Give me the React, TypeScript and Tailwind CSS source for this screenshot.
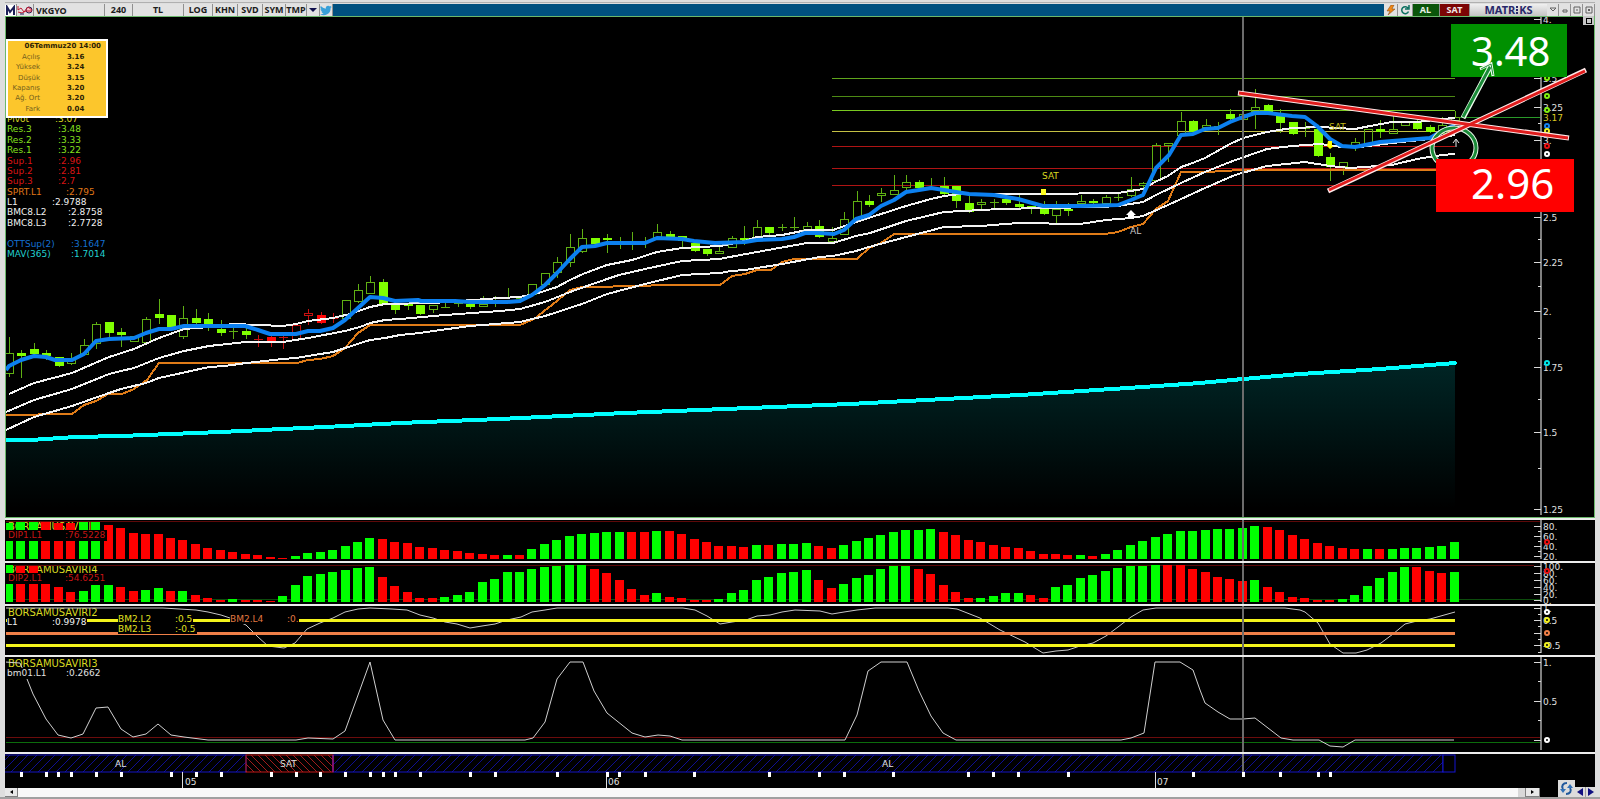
import type { ReactNode } from "react";

type Point = [number, number];
type Candle = [string, number, number, number, number];

const STEP = 12.464;
const barX = (i: number) => Math.round(9 + i * STEP);
const toPoints = (pts: Point[]) => pts.map((p) => p.join(",")).join(" ");

// kind (h hollow, f filled, c cross, v wick only, upper case = red), body top, body bottom, high, low
const candles: Candle[] = [
  ["h", 353, 373, 337, 377], ["f", 353, 356, 350, 378], ["f", 349, 354, 343, 354], ["f", 353, 356, 350, 360],
  ["f", 357, 366, 357, 366], ["h", 359, 363, 353, 365], ["h", 345, 354, 339, 355], ["h", 324, 343, 322, 349],
  ["f", 322, 333, 322, 337], ["f", 332, 335, 328, 347], ["h", 336, 341, 336, 341], ["h", 319, 342, 317, 342],
  ["f", 314, 318, 299, 324], ["f", 315, 327, 315, 330], ["h", 318, 336, 306, 339], ["f", 318, 323, 309, 323],
  ["f", 319, 324, 313, 331], ["f", 329, 333, 320, 336], ["c", 331, 331, 328, 339], ["f", 331, 335, 328, 339],
  ["C", 339, 339, 335, 347], ["F", 337, 342, 335, 347], ["C", 337, 337, 335, 349], ["H", 325, 339, 325, 339],
  ["H", 313, 315, 309, 325], ["F", 315, 323, 312, 323], ["C", 318, 318, 313, 323], ["h", 300, 318, 300, 318],
  ["h", 290, 301, 284, 303], ["h", 282, 293, 276, 293], ["f", 282, 304, 279, 304], ["f", 305, 310, 305, 314],
  ["f", 304, 306, 304, 310], ["f", 305, 314, 305, 314], ["h", 305, 309, 305, 313], ["c", 307, 307, 303, 307],
  ["c", 303, 303, 302, 307], ["f", 304, 307, 302, 309], ["h", 304, 306, 296, 306], ["v", 300, 300, 296, 307],
  ["c", 297, 297, 288, 298], ["c", 298, 298, 296, 303], ["h", 284, 294, 284, 294], ["h", 273, 284, 273, 284],
  ["h", 262, 272, 257, 278], ["h", 247, 262, 234, 267], ["h", 238, 251, 229, 253], ["f", 238, 244, 238, 244],
  ["f", 238, 240, 234, 253], ["v", 240, 240, 237, 249], ["v", 240, 240, 232, 250], ["v", 240, 240, 237, 248],
  ["h", 232, 238, 224, 238], ["f", 234, 237, 231, 237], ["f", 236, 241, 236, 248], ["f", 243, 251, 243, 251],
  ["f", 249, 254, 249, 256], ["h", 251, 253, 246, 253], ["h", 238, 247, 236, 247], ["f", 238, 240, 226, 245],
  ["h", 227, 237, 220, 237], ["f", 227, 233, 227, 235], ["c", 227, 227, 224, 231], ["c", 227, 227, 217, 230],
  ["h", 226, 231, 222, 231], ["f", 226, 237, 220, 237], ["h", 238, 241, 227, 243], ["h", 219, 234, 212, 234],
  ["h", 201, 218, 191, 218], ["f", 201, 205, 195, 207], ["h", 193, 195, 188, 202], ["h", 190, 194, 175, 194],
  ["h", 182, 187, 175, 191], ["f", 182, 188, 180, 188], ["v", 185, 185, 178, 188], ["f", 186, 194, 177, 194],
  ["f", 186, 201, 186, 208], ["f", 203, 212, 195, 212], ["h", 202, 204, 199, 209], ["c", 202, 202, 199, 208],
  ["f", 199, 203, 199, 205], ["f", 204, 207, 195, 207], ["f", 206, 209, 206, 214], ["f", 208, 214, 201, 214],
  ["h", 209, 215, 201, 224], ["f", 209, 211, 203, 216], ["h", 201, 203, 195, 203], ["f", 201, 203, 199, 203],
  ["h", 197, 203, 195, 203], ["c", 197, 197, 194, 201], ["h", 189, 195, 177, 197], ["h", 183, 185, 182, 197],
  ["h", 145, 180, 143, 180], ["h", 143, 145, 143, 162], ["h", 121, 135, 112, 135], ["f", 121, 132, 120, 132],
  ["h", 125, 127, 119, 128], ["c", 126, 126, 122, 135], ["f", 114, 119, 109, 122], ["h", 114, 119, 108, 122],
  ["h", 107, 111, 89, 129], ["f", 105, 112, 104, 112], ["f", 116, 123, 109, 133], ["f", 122, 134, 122, 134],
  ["c", 128, 128, 122, 137], ["f", 129, 156, 129, 156], ["f", 157, 167, 153, 181], ["h", 162, 166, 162, 175],
  ["h", 142, 147, 138, 151], ["h", 129, 143, 129, 143], ["f", 129, 132, 120, 138], ["h", 129, 133, 116, 133],
  ["h", 122, 125, 122, 125], ["f", 122, 129, 120, 129], ["f", 127, 132, 125, 133], ["h", 125, 133, 117, 133],
  ["h", 117, 120, 111, 120],
];

const cyanLine: Point[] = [
  [6, 440], [30, 440], [76, 437], [121, 436], [221, 432], [345, 426], [400, 423], [500, 419], [625, 413], [700, 410],
  [850, 404], [1020, 395], [1143, 387], [1200, 383], [1243, 379], [1300, 374], [1380, 369], [1455, 363],
];

const blueLine: Point[] = [
  [6, 370], [9, 366], [21, 360], [34, 356], [46, 357], [55, 360], [72, 360], [84, 354], [96, 341], [109, 339],
  [134, 338], [146, 333], [159, 329], [171, 329], [184, 326], [245, 326], [258, 330], [270, 334], [296, 334],
  [308, 331], [320, 331], [333, 328], [345, 320], [358, 308], [370, 297], [383, 298], [395, 301], [418, 300],
  [421, 301], [455, 301], [470, 302], [507, 302], [520, 301], [532, 295], [545, 285], [557, 273], [570, 259],
  [582, 247], [595, 246], [607, 243], [645, 243], [657, 238], [682, 239], [694, 241], [715, 243], [745, 242],
  [757, 240], [782, 239], [794, 237], [805, 233], [819, 233], [834, 234], [844, 230], [856, 219], [869, 215],
  [881, 206], [894, 200], [906, 192], [919, 190], [931, 188], [944, 190], [956, 192], [969, 194], [994, 195],
  [1006, 197], [1018, 199], [1043, 206], [1080, 206], [1118, 205], [1131, 200], [1143, 195], [1156, 168],
  [1169, 155], [1181, 135], [1193, 134], [1205, 129], [1218, 128], [1230, 122], [1243, 117], [1255, 113],
  [1268, 113], [1292, 116], [1305, 117], [1317, 126], [1330, 139], [1342, 146], [1355, 147], [1380, 142],
  [1430, 138], [1442, 131], [1455, 125],
];

const bandLines: Point[][] = [
  [
    [9, 394], [34, 383], [72, 373], [109, 357], [134, 349], [159, 338], [184, 329], [209, 327], [233, 324],
    [283, 326], [296, 324], [308, 321], [333, 318], [350, 314], [370, 307], [385, 304], [433, 303], [500, 298],
    [520, 297], [538, 293], [557, 287], [570, 280], [583, 274], [607, 265], [632, 260], [657, 252], [682, 248],
    [720, 246], [745, 241], [757, 237], [782, 235], [807, 230], [833, 230], [856, 222], [881, 214], [906, 206],
    [931, 199], [944, 196], [960, 194], [1040, 194], [1118, 193], [1143, 189], [1155, 182], [1168, 176],
    [1181, 167], [1190, 164], [1205, 158], [1230, 144], [1243, 138], [1267, 132], [1292, 128], [1320, 127],
    [1355, 129], [1370, 126], [1392, 122], [1417, 122], [1442, 119], [1455, 118],
  ],
  [
    [6, 412], [34, 400], [72, 389], [109, 374], [121, 371], [134, 368], [159, 358], [184, 351], [209, 346],
    [246, 342], [283, 342], [308, 338], [345, 331], [360, 327], [370, 323], [385, 320], [400, 319], [445, 315],
    [500, 311], [520, 309], [545, 302], [570, 292], [607, 279], [619, 275], [645, 269], [682, 261], [719, 259],
    [757, 252], [807, 243], [833, 243], [856, 236], [870, 233], [906, 221], [944, 212], [1000, 209], [1043, 208],
    [1100, 207], [1118, 206], [1143, 202], [1156, 195], [1181, 183], [1205, 172], [1230, 162], [1267, 149],
    [1292, 146], [1320, 144], [1342, 147], [1360, 147], [1392, 143], [1430, 139], [1455, 135],
  ],
  [
    [6, 430], [34, 417], [72, 406], [109, 393], [121, 389], [146, 383], [159, 378], [209, 367], [225, 366],
    [246, 363], [283, 359], [296, 358], [308, 356], [333, 352], [345, 348], [370, 340], [385, 338], [400, 335],
    [420, 333], [433, 331], [470, 326], [520, 322], [532, 319], [545, 316], [582, 304], [607, 294], [645, 284],
    [682, 275], [720, 273], [731, 271], [745, 270], [782, 264], [820, 257], [833, 256], [856, 251], [869, 247],
    [906, 237], [944, 227], [981, 226], [1018, 223], [1080, 224], [1106, 220], [1131, 218], [1143, 216],
    [1168, 205], [1205, 188], [1235, 175], [1267, 166], [1305, 162], [1330, 166], [1350, 168], [1392, 165],
    [1417, 159], [1442, 155], [1455, 154],
  ],
];

const orangeLine: Point[] = [
  [6, 415], [72, 414], [84, 405], [96, 401], [108, 394], [122, 394], [134, 389], [147, 380], [159, 363], [297, 363],
  [308, 360], [320, 359], [333, 356], [345, 348], [358, 333], [370, 325], [520, 325], [534, 319], [557, 301],
  [570, 290], [582, 287], [645, 286], [657, 285], [720, 285], [732, 276], [745, 274], [757, 270], [771, 270],
  [782, 262], [794, 259], [857, 259], [869, 248], [881, 243], [894, 234], [1105, 234], [1118, 232], [1131, 227],
  [1143, 224], [1156, 209], [1168, 201], [1181, 172], [1205, 172], [1225, 171], [1240, 170], [1455, 170],
];

const levels = [
  { y: 78, color: "#5fa51c" },
  { y: 96, color: "#4d8a14" },
  { y: 110, color: "#79c820" },
  { y: 131, color: "#c4c044" },
  { y: 146, color: "#b01414" },
  { y: 168, color: "#b01414" },
  { y: 185, color: "#b01414" },
];

const dip1Colors =
  "GGGRRRGGRRRRRRRRRRRRRRRGGGGGGGRRRRRRRRRRGRGGGGGGGGRRGRRRRRRRGRGGGRRGGGGGGGGRRRRRRRRRRRGRGGGGGGGGGGGGGRRRRRRRRGRGGGGGG";
const dip1Tops = [
  523, 522, 522, 522, 523, 523, 522, 522, 525, 528, 533, 534, 534, 538, 540, 544, 548, 550, 552, 554, 555, 557, 558,
  556, 553, 552, 550, 546, 542, 538, 539, 542, 543, 547, 548, 550, 551, 553, 554, 555, 555, 555, 549, 544, 540, 536,
  534, 533, 532, 532, 532, 532, 531, 531, 534, 539, 542, 546, 546, 547, 545, 545, 544, 544, 543, 546, 548, 545, 541,
  538, 535, 532, 530, 530, 529, 532, 535, 540, 542, 545, 547, 548, 551, 554, 554, 555, 555, 556, 554, 550, 545, 541,
  537, 534, 531, 531, 530, 529, 529, 528, 526, 527, 530, 535, 539, 543, 546, 548, 549, 549, 549, 549, 548, 548, 547,
  546, 542,
];

const dip2Colors =
  "GRRRRRGGGRRGGRGRRRGRRRGGGGGGGGRRRRRGGGGGGGGGGGGRRRRRGRRRRGGGGGGGGRRGGGGGGRRRRRGGGGRRGGGGGGGGGRRRRRRRGRRRRRRGGGGGGRRRG";
const dip2Tops = [
  565, 566, 566, 584, 587, 592, 591, 585, 585, 587, 591, 590, 588, 591, 591, 595, 598, 600, 599, 600, 600, 601, 596,
  585, 576, 574, 572, 570, 568, 567, 577, 586, 592, 598, 598, 597, 595, 592, 582, 579, 572, 572, 569, 567, 566, 565,
  565, 569, 573, 580, 589, 595, 593, 597, 598, 600, 600, 599, 593, 590, 580, 577, 573, 572, 570, 580, 588, 584, 578,
  575, 569, 566, 566, 569, 574, 585, 592, 598, 598, 596, 593, 593, 595, 598, 587, 585, 578, 575, 571, 568, 566, 566,
  565, 565, 565, 569, 572, 577, 579, 581, 580, 587, 592, 597, 598, 600, 600, 599, 595, 586, 578, 572, 567, 567, 571,
  573, 572,
];

const bm2Line: Point[] = [
  [5, 608], [163, 608], [196, 610], [208, 612], [221, 615], [233, 619], [246, 625], [258, 637], [268, 646], [284, 648],
  [295, 643], [307, 629], [320, 623], [333, 618], [345, 612], [358, 609], [370, 608], [392, 609], [407, 610],
  [420, 615], [433, 618], [445, 622], [457, 624], [470, 628], [482, 626], [495, 624], [507, 620], [521, 617],
  [532, 612], [545, 610], [557, 608], [683, 608], [695, 610], [707, 616], [720, 624], [732, 622], [746, 620],
  [757, 616], [770, 615], [782, 612], [795, 610], [820, 611], [832, 614], [844, 612], [857, 610], [875, 608],
  [948, 608], [957, 609], [980, 618], [1000, 630], [1025, 642], [1043, 653], [1056, 651], [1068, 650], [1080, 646],
  [1093, 643], [1106, 636], [1118, 627], [1131, 617], [1143, 610], [1156, 608], [1285, 608], [1300, 610],
  [1305, 612], [1318, 623], [1330, 644], [1343, 653], [1356, 653], [1367, 650], [1381, 643], [1393, 634],
  [1405, 624], [1417, 621], [1430, 619], [1455, 612],
];

const bm01Line: Point[] = [
  [5, 662], [20, 663], [27, 679], [33, 694], [46, 719], [58, 735], [71, 738], [83, 734], [96, 708], [108, 707],
  [121, 729], [133, 737], [146, 734], [158, 724], [171, 735], [184, 737], [208, 740], [296, 740], [308, 738],
  [333, 739], [345, 731], [370, 662], [383, 720], [395, 740], [525, 740], [533, 738], [545, 722], [557, 679],
  [570, 662], [583, 662], [594, 691], [607, 713], [632, 733], [645, 737], [658, 735], [670, 736], [682, 740],
  [845, 740], [857, 715], [868, 671], [881, 662], [907, 662], [919, 691], [931, 716], [943, 733], [956, 740],
  [1043, 740], [1121, 740], [1131, 738], [1144, 733], [1155, 662], [1180, 662], [1193, 670], [1200, 690],
  [1205, 703], [1218, 712], [1230, 719], [1243, 719], [1255, 718], [1268, 728], [1281, 738], [1293, 740],
  [1319, 740], [1330, 746], [1343, 747], [1355, 740], [1454, 740],
];

const legend = [
  { name: "Pivot", value: ":3.07", color: "text-[#d8d820]", width: "w-[48px]" },
  { name: "Res.3", value: ":3.48", color: "text-[#86e01e]", width: "w-[51px]" },
  { name: "Res.2", value: ":3.33", color: "text-[#86e01e]", width: "w-[51px]" },
  { name: "Res.1", value: ":3.22", color: "text-[#86e01e]", width: "w-[51px]" },
  { name: "Sup.1", value: ":2.96", color: "text-[#d81414]", width: "w-[51px]" },
  { name: "Sup.2", value: ":2.81", color: "text-[#d81414]", width: "w-[51px]" },
  { name: "Sup.3", value: ":2.7", color: "text-[#d81414]", width: "w-[51px]" },
  { name: "SPRT.L1", value: ":2.795", color: "text-[#e07818]", width: "w-[59px]" },
  { name: "L1", value: ":2.9788", color: "text-[#f0f0f0]", width: "w-[45px]" },
  { name: "BMC8.L2", value: ":2.8758", color: "text-[#f0f0f0]", width: "w-[61px]" },
  { name: "BMC8.L3", value: ":2.7728", color: "text-[#f0f0f0]", width: "w-[61px]" },
  { name: "\u00a0", value: "", color: "text-black", width: "w-[61px]" },
  { name: "OTTSup(2)", value: ":3.1647", color: "text-[#1470d0]", width: "w-[64px]" },
  { name: "MAV(365)", value: ":1.7014", color: "text-[#20d0d0]", width: "w-[64px]" },
];

const quote = [
  ["Açılış", "3.16"],
  ["Yüksek", "3.24"],
  ["Düşük", "3.15"],
  ["Kapanış", "3.20"],
  ["Ağ. Ort", "3.20"],
  ["Fark", "0.04"],
];

const timeTicks = [
  21, 46, 58, 71, 96, 121, 171, 196, 221, 271, 296, 320, 345, 370, 383, 395, 420, 470, 495, 557, 607, 619, 645, 694,
  769, 819, 844, 893, 968, 993, 1018, 1068, 1193, 1243, 1280, 1318, 1330,
];

const CandleShape = ({ candle, index }: { candle: Candle; index: number }) => {
  const [kind, top, bottom, high, low] = candle;
  const x = barX(index);
  const red = kind === kind.toUpperCase();
  const line = red ? "#c81010" : "#5fb013";
  const k = kind.toLowerCase();
  return (
    <g>
      <rect x={x} y={high} width={1} height={Math.max(1, top - high)} fill={line} />
      <rect x={x} y={bottom} width={1} height={Math.max(1, low - bottom)} fill={line} />
      {k === "f" && <rect x={x - 4} y={top} width={9} height={bottom - top} fill={red ? "#ff0808" : "#80ff00"} />}
      {k === "h" && (
        <rect x={x - 4 + 0.5} y={top + 0.5} width={8} height={bottom - top} fill="none" stroke={line} />
      )}
      {k === "c" && <rect x={x - 4} y={top} width={9} height={1} fill={line} />}
      {k === "v" && <rect x={x} y={high} width={1} height={low - high} fill={line} />}
    </g>
  );
};

const Bars = ({ colors, tops, bottom }: { colors: string; tops: number[]; bottom: number }) => (
  <g shapeRendering="crispEdges">
    {tops.map((t, i) => (
      <rect
        key={i}
        x={barX(i) - 5}
        y={t}
        width={9}
        height={bottom - t}
        fill={colors[i] === "G" ? "#00ff00" : "#ff0000"}
      />
    ))}
  </g>
);

type Tick = { y: number; label?: string; minor?: boolean; color?: string };
type Ring = { y: number; color: string };

const Axis = ({
  top,
  height,
  ticks,
  rings,
  children,
}: {
  top: number;
  height: number;
  ticks: Tick[];
  rings: Ring[];
  children?: ReactNode;
}) => (
  <svg
    className="h-full w-[60px] shrink-0 font-['DejaVu_Sans','Liberation_Sans',sans-serif] text-[9px]"
    viewBox={`1534 ${top} 60 ${height}`}
    preserveAspectRatio="none"
  >
    {children}
    <rect x={1540} y={top} width={2} height={height - 2} fill="#808080" />
    {ticks.map((t) => (
      <g key={t.y}>
        {t.color ? null : (
          <rect x={t.minor ? 1538 : 1534} y={t.y} width={t.minor ? 3 : 7} height={1} fill="#d8d8d8" />
        )}
        {t.label && (
          <text x={1543} y={t.y + 4} fill={t.color ?? "#e0e0e0"}>
            {t.label}
          </text>
        )}
      </g>
    ))}
    {rings.map((r) => (
      <circle key={r.y} cx={1547} cy={r.y} r={2} fill="black" stroke={r.color} strokeWidth={2} />
    ))}
  </svg>
);

const Plot = ({ top, height, children }: { top: number; height: number; children: ReactNode }) => (
  <svg
    className="relative h-full min-w-0 flex-1 font-['DejaVu_Sans','Liberation_Sans',sans-serif] text-[9px]"
    viewBox={`6 ${top} 1528 ${height}`}
    preserveAspectRatio="none"
  >
    {children}
    <rect x={1242} y={top} width={2} height={height} fill="#6c6c6c" />
  </svg>
);

const PanelTitle = ({ children }: { children: ReactNode }) => (
  <h2 className="absolute left-[2px] top-[1px] text-[10px] leading-[11px] text-[#d8d820]">{children}</h2>
);

const ToolButton = ({ className, children }: { className: string; children: ReactNode }) => (
  <button
    type="button"
    className={`flex h-full shrink-0 items-center justify-center border-r border-[#909090] bg-[#e2e2e2] ${className}`}
  >
    {children}
  </button>
);

const Toolbar = () => (
  <header className="flex h-[12px] items-stretch bg-[#00507f] font-['Noto_Sans','Open_Sans',sans-serif] text-[9px] font-bold leading-[10px] text-[#1c1c1c]">
    <ToolButton className="w-[12px]">
      <svg className="h-[11px] w-[11px]" viewBox="0 0 11 11">
        <path d="M0 0H11V11H0Z" fill="#ffffff" />
        <path d="M2 10V2L5 7L9 2V10" fill="none" stroke="#1c2058" strokeWidth="2" />
      </svg>
    </ToolButton>
    <ToolButton className="w-[17px]">
      <svg className="h-[10px] w-[16px]" viewBox="0 0 16 10">
        <circle cx="12" cy="5" r="3" fill="#f8c0c8" stroke="#302050" />
        <path d="M1 1V5L4 3L7 7L11 2L15 5M9 6H15" fill="none" stroke="#c01830" />
        <path d="M1 7L5 8L9 6" fill="none" stroke="#c01830" />
        <path d="M3 9H7" fill="none" stroke="#20205c" />
      </svg>
    </ToolButton>
    <input
      aria-label="Sembol"
      defaultValue="VKGYO"
      className="h-full w-[71px] shrink-0 border-r border-[#909090] bg-[#e2e2e2] pl-[2px] outline-none"
    />
    <ToolButton className="w-[28px]">240</ToolButton>
    <ToolButton className="w-[51px]">TL</ToolButton>
    <ToolButton className="w-[29px]">LOG</ToolButton>
    <ToolButton className="w-[25px]">KHN</ToolButton>
    <ToolButton className="w-[25px]">SVD</ToolButton>
    <ToolButton className="w-[23px]">SYM</ToolButton>
    <ToolButton className="w-[21px]">TMP</ToolButton>
    <ToolButton className="w-[13px]">
      <svg className="h-[4px] w-[8px]" viewBox="0 0 8 4" role="img" aria-label="Menü">
        <path d="M0 0H8L4 4Z" fill="#10104c" />
      </svg>
    </ToolButton>
    <ToolButton className="w-[13px]">
      <svg className="h-[11px] w-[12px]" viewBox="0 0 24 22" role="img" aria-label="Twitter">
        <path
          d="M23.6 3.6a9 9 0 0 1-2.8.8A4.8 4.8 0 0 0 23 1.7a10 10 0 0 1-3.1 1.2 4.9 4.9 0 0 0-8.3 4.4A13.8 13.8 0 0 1 1.6 2.2a4.9 4.9 0 0 0 1.5 6.5 5 5 0 0 1-2.2-.6 4.9 4.9 0 0 0 3.9 4.8 5 5 0 0 1-2.2.1 4.9 4.9 0 0 0 4.6 3.4A9.8 9.8 0 0 1 0 18.400a13.8 13.8 0 0 0 21.2-12.3 10 10 0 0 0 2.4-2.5z"
          fill="#38a0d8"
        />
      </svg>
    </ToolButton>
    <div className="flex-1" />
    <ToolButton className="w-[14px]">
      <svg className="h-[10px] w-[10px]" viewBox="0 0 10 10" role="img" aria-label="Hızlı emir">
        <path d="M5 0L1 6H4L2 10L9 4H6L8 0Z" fill="#f08818" stroke="#7a4008" strokeWidth=".5" />
      </svg>
    </ToolButton>
    <ToolButton className="w-[15px]">
      <svg className="h-[10px] w-[10px]" viewBox="0 0 10 10" role="img" aria-label="Yenile">
        <path d="M8 3A3.5 3.5 0 1 0 8.5 6.5M9 0V4H5" fill="none" stroke="#0c7060" strokeWidth="1.5" />
      </svg>
    </ToolButton>
    <button type="button" className="w-[27px] border-r border-[#909090] bg-[#0a550a] pr-px text-[#e8f0e8]">
      AL
    </button>
    <button type="button" className="w-[30px] border-r border-[#909090] bg-[#7c0404] text-[#f0e8e8]">
      SAT
    </button>
    <div className="flex w-[77px] items-center justify-center bg-linear-to-b from-[#f0f0f0] to-[#c4c4c4] text-[11px] text-[#28286a]">
      MATR
      <svg className="mx-px h-[8px] w-[2px]" viewBox="0 0 2 8">
        <path d="M0 0H2V2H0ZM0 3H2V5H0ZM0 6H2V8H0Z" fill="#28286a" />
      </svg>
      KS
    </div>
    {["M1 2H7L4 5Z", "M2 4H6V6H2Z", "M1 1H7V7H1ZM3 4H5", "M1 1H7V7H1ZM3 3L5 5M5 3L3 5"].map((d) => (
      <ToolButton key={d} className="w-[12px]">
        <svg className="h-[8px] w-[8px]" viewBox="0 0 8 8">
          <path d={d} fill="none" stroke="#606060" />
        </svg>
      </ToolButton>
    ))}
  </header>
);

const Tooltip = () => (
  <div className="absolute left-0 top-[22px] w-[102px] border-2 border-white bg-[#fcc62c] pb-[2px] text-[7px] text-[#2c2204]">
    <p className="pr-[5px] text-right font-bold leading-[11px]">06Temmuz20 14:00</p>
    <table className="h-[62px] w-full">
      <tbody>
        {quote.map(([name, value]) => (
          <tr key={name} className="leading-[10px]">
            <th className="w-[32px] text-right font-normal text-[#75601c]">{name}</th>
            <td className="pl-[27px] font-bold">{value}</td>
          </tr>
        ))}
      </tbody>
    </table>
  </div>
);

const MainPanel = () => (
  <section className="relative flex h-[502px] border border-[#6cb86c] bg-black">
    <Plot top={17} height={500}>
      <defs>
        <linearGradient id="area" gradientUnits="userSpaceOnUse" x1="0" y1="360" x2="0" y2="508">
          <stop offset="0" stopColor="#002626" />
          <stop offset="1" stopColor="#000000" />
        </linearGradient>
      </defs>
      <polygon points={`6,517 ${toPoints(cyanLine)} 1455,517`} fill="url(#area)" />
      <g shapeRendering="crispEdges">
        {levels.map((l) => (
          <rect key={l.y} x={832} y={l.y} width={623} height={1} fill={l.color} />
        ))}
        <rect x={1455} y={117} width={79} height={1} fill="#2a9a2a" />
        {candles.map((c, i) => (
          <CandleShape key={i} candle={c} index={i} />
        ))}
      </g>
      <g fill="none" shapeRendering="crispEdges">
        <polyline points={toPoints(orangeLine)} stroke="#e07c18" strokeWidth={2} />
        {bandLines.map((line, i) => (
          <polyline key={i} points={toPoints(line)} stroke="#f4f4f4" strokeWidth={2} />
        ))}
        <polyline points={toPoints(cyanLine)} stroke="#00ffff" strokeWidth={4} strokeLinecap="round" />
      </g>
      <polyline points={toPoints(blueLine)} fill="none" stroke="#0c80f0" strokeWidth={4} strokeLinejoin="round" />
      <text x={1042} y={179} fill="#d8d820">
        SAT
      </text>
      <path d="M1041 189H1046V195H1041Z" fill="#ffff20" />
      <text x={1329} y={130} fill="#c0b818">
        SAT
      </text>
      <path d="M1328 141H1332V146H1334L1330 149L1327 146Z" fill="#ffff00" />
      <path d="M1131 210L1136 215H1134V218H1128V215H1126Z" fill="#ffffff" />
      <text x={1130} y={234} fill="#c8c8c8">
        AL
      </text>
      <path d="M1456 147V140M1453 143L1456 139L1459 143" fill="none" stroke="#e8e8e8" />
    </Plot>
    <Axis
      top={17}
      height={500}
      ticks={[
        { y: 19, label: "4." },
        { y: 78, label: "3.5" },
        { y: 107, label: "3.25" },
        { y: 117, label: "3.17", color: "#d8c820" },
        { y: 123, minor: true },
        { y: 140, label: "3." },
        { y: 217, label: "2.5" },
        { y: 239, minor: true },
        { y: 262, label: "2.25" },
        { y: 286, minor: true },
        { y: 311, label: "2." },
        { y: 338, minor: true },
        { y: 367, label: "1.75" },
        { y: 399, minor: true },
        { y: 432, label: "1.5" },
        { y: 468, minor: true },
        { y: 509, label: "1.25" },
      ]}
      rings={[
        { y: 78, color: "#80f010" },
        { y: 96, color: "#80f010" },
        { y: 110, color: "#80f010" },
        { y: 126, color: "#1482f0" },
        { y: 131, color: "#f0f020" },
        { y: 146, color: "#e81010" },
        { y: 154, color: "#ffffff" },
        { y: 363, color: "#00e8e8" },
      ]}
    >
      <rect x={1534} y={117} width={8} height={1} fill="#2a9a2a" />
    </Axis>

    <dl className="absolute left-[1px] top-[97px] flex h-[145px] flex-col justify-between text-[9px] leading-[10px]">
      {legend.map((row) => (
        <div key={row.name} className={`flex ${row.color}`}>
          <dt className={row.width}>{row.name}</dt>
          <dd>{row.value}</dd>
        </div>
      ))}
    </dl>
    <Tooltip />

    <svg className="absolute inset-0 h-full w-full" viewBox="6 17 1588 500" preserveAspectRatio="none">
      <g fill="none">
        <ellipse cx="1454" cy="148" rx="22" ry="20" stroke="#e8f4e8" strokeWidth="5" />
        <ellipse cx="1454" cy="148" rx="22" ry="20" stroke="#1a8a38" strokeWidth="3" />
        <path d="M1328 191L1586 70M1238 93L1569 138" stroke="#ffe8e8" strokeWidth="5" />
        <path d="M1329 190L1585 71M1239 93L1568 138" stroke="#e01c1c" strokeWidth="3" />
      </g>
    </svg>
    <p className="absolute right-[27px] top-[7px] h-[53px] w-[116px] bg-[#009000] pl-[20px] font-['Noto_Sans','Open_Sans',sans-serif] text-[40px] leading-[54px] text-white">
      3.48
    </p>
    <p className="absolute right-[20px] top-[142px] h-[53px] w-[138px] bg-[#ff0000] pl-[35px] font-['Noto_Sans','Open_Sans',sans-serif] text-[42px] leading-[48px] text-white">
      2.96
    </p>
    <svg
      className="pointer-events-none absolute inset-0 h-full w-full"
      viewBox="6 17 1588 500"
      preserveAspectRatio="none"
    >
      <g fill="none">
        <path d="M1463 118L1490 67" stroke="#f0fff0" strokeWidth="5" />
        <path d="M1480 69L1491 64L1493 76" stroke="#f0fff0" strokeWidth="3" />
        <path d="M1463 117L1490 67" stroke="#1a8a38" strokeWidth="3" />
        <path d="M1481 69L1491 64L1493 75" stroke="#1a8a38" />
      </g>
    </svg>
    <button
      type="button"
      aria-label="Büyüt"
      className="absolute -top-px right-0 flex h-[9px] w-[11px] items-center justify-center bg-[#c8c8c8]"
    >
      <span className="h-[6px] w-[6px] border border-black" />
    </button>
  </section>
);

const Dip1Panel = () => (
  <section className="relative flex h-[41px] border-x border-black bg-black">
    <PanelTitle>BORSAMUSAVIRI</PanelTitle>
    <Plot top={520} height={41}>
      <rect x={6} y={521} width={1528} height={1} fill="#5c0808" />
      <Bars colors={dip1Colors} tops={dip1Tops} bottom={559} />
    </Plot>
    <Axis
      top={520}
      height={41}
      ticks={[
        { y: 526, label: "80." },
        { y: 531, minor: true },
        { y: 536, label: "60." },
        { y: 541, minor: true },
        { y: 546, label: "40." },
        { y: 551, minor: true },
        { y: 556, label: "20." },
      ]}
      rings={[{ y: 542, color: "#e81010" }]}
    >
      <rect x={1534} y={521} width={7} height={1} fill="#5c0808" />
    </Axis>
    <p className="absolute left-0 top-[10px] flex w-[101px] bg-black pl-[2px] text-[9px] leading-[11px] text-[#c81414]">
      <span className="w-[57px]">DIP1.L1</span>:76.5228
    </p>
  </section>
);

const Dip2Panel = () => (
  <section className="relative flex h-[41px] border-x border-black bg-black">
    <PanelTitle>BORSAMUSAVIRI4</PanelTitle>
    <Plot top={563} height={41}>
      <rect x={6} y={565} width={1528} height={1} fill="#5c0808" />
      <rect x={6} y={599} width={1528} height={1} fill="#0c4c0c" />
      <Bars colors={dip2Colors} tops={dip2Tops} bottom={602} />
    </Plot>
    <Axis
      top={563}
      height={41}
      ticks={[
        { y: 566, label: "100." },
        { y: 573, label: "80." },
        { y: 580, label: "60." },
        { y: 587, label: "40." },
        { y: 594, label: "20." },
        { y: 600, label: "0." },
      ]}
      rings={[{ y: 571, color: "#e81010" }]}
    >
      <rect x={1534} y={599} width={8} height={1} fill="#0c4c0c" />
    </Axis>
    <p className="absolute left-0 top-[10px] flex w-[101px] bg-black pl-[2px] text-[9px] leading-[11px] text-[#c81414]">
      <span className="w-[57px]">DIP2.L1</span>:54.6251
    </p>
  </section>
);

const Bm2Panel = () => (
  <section className="relative flex h-[49px] border-x border-black bg-black">
    <PanelTitle>BORSAMUSAVIRI2</PanelTitle>
    <Plot top={606} height={49}>
      <polyline points={toPoints(bm2Line)} fill="none" stroke="#c8c8c8" />
      <rect x={6} y={619} width={1449} height={3} fill="#f4f41c" />
      <rect x={6} y={632} width={1449} height={3} fill="#f08048" />
      <rect x={6} y={644} width={1449} height={3} fill="#f4f41c" />
    </Plot>
    <Axis
      top={606}
      height={49}
      ticks={[
        { y: 608, label: "1." },
        { y: 614, minor: true },
        { y: 620, label: "0.5" },
        { y: 626, minor: true },
        { y: 633 },
        { y: 639, minor: true },
        { y: 645, label: "-0.5" },
        { y: 652, minor: true },
      ]}
      rings={[
        { y: 612, color: "#ffffff" },
        { y: 620, color: "#f0f020" },
        { y: 633, color: "#f08048" },
        { y: 645, color: "#f0f020" },
      ]}
    />
    <p className="absolute left-[1px] top-[11px] flex bg-black text-[9px] leading-[10px] text-[#f0f0f0]">
      <span className="w-[45px]">L1</span>:0.9978
    </p>
    <div className="absolute left-[112px] top-[8px] text-[9px] leading-[10px] text-[#e0e020]">
      <p className="flex w-[75px] bg-black">
        <span className="w-[57px]">BM2.L2</span>:0.5
      </p>
      <p className="flex w-[79px] bg-black">
        <span className="w-[57px]">BM2.L3</span>:-0.5
      </p>
    </div>
    <p className="absolute left-[224px] top-[8px] flex bg-black text-[9px] leading-[10px] text-[#e07840]">
      <span className="w-[57px]">BM2.L4</span>:0.
    </p>
  </section>
);

const Bm01Panel = () => (
  <section className="relative flex h-[95px] border-x border-black bg-black">
    <PanelTitle>BORSAMUSAVIRI3</PanelTitle>
    <Plot top={657} height={95}>
      <rect x={6} y={737} width={1528} height={1} fill="#6c0c0c" />
      <rect x={6} y={742} width={1528} height={1} fill="#0c6c0c" />
      <polyline points={toPoints(bm01Line)} fill="none" stroke="#d0d0d0" />
    </Plot>
    <Axis
      top={657}
      height={95}
      ticks={[
        { y: 662, label: "1." },
        { y: 681, minor: true },
        { y: 701, label: "0.5" },
        { y: 720, minor: true },
        { y: 740 },
      ]}
      rings={[{ y: 740, color: "#ffffff" }]}
    >
      <rect x={1534} y={737} width={8} height={1} fill="#6c0c0c" />
      <rect x={1534} y={742} width={8} height={1} fill="#0c6c0c" />
    </Axis>
    <p className="absolute left-[1px] top-[11px] flex bg-black text-[9px] leading-[11px] text-[#e0e0e0]">
      <span className="w-[59px]">bm01.L1</span>:0.2662
    </p>
  </section>
);

const TimeStrip = () => (
  <footer className="flex bg-black">
    <div className="min-w-0 flex-1">
      <svg
        className="block h-[34px] w-full font-['DejaVu_Sans','Liberation_Sans',sans-serif] text-[9px]"
        viewBox="5 754 1535 34"
        preserveAspectRatio="none"
      >
        <defs>
          <pattern id="buy" width="9" height="9" patternUnits="userSpaceOnUse">
            <path d="M-1 10L10 -1M-1 1L1 -1M8 10L10 8" stroke="#0e0e90" />
          </pattern>
          <pattern id="sell" width="7" height="7" patternUnits="userSpaceOnUse">
            <path d="M-1 -1L8 8M-1 6L1 8M6 -1L8 1" stroke="#a01c1c" />
          </pattern>
        </defs>
        <g strokeWidth={1}>
          <rect x={4} y={755} width={242} height={17} fill="url(#buy)" stroke="#1414c0" />
          <rect x={333} y={755} width={1110} height={17} fill="url(#buy)" stroke="#1414c0" />
          <rect x={1443} y={755} width={12} height={17} fill="black" stroke="#1414d0" />
          <rect x={246} y={755} width={87} height={17} fill="url(#sell)" stroke="#c01818" />
          <path d="M333 755V772" stroke="#9010a0" />
        </g>
        <g fill="#e0e0e0">
          <text x={115} y={767}>AL</text>
          <text x={280} y={767}>SAT</text>
          <text x={882} y={767}>AL</text>
          <text x={185} y={785}>05</text>
          <text x={608} y={785}>06</text>
          <text x={1157} y={785}>07</text>
          <rect x={182} y={772} width={1} height={16} />
          <rect x={606} y={772} width={1} height={16} />
          <rect x={1155} y={772} width={1} height={16} />
        </g>
        <rect x={1242} y={754} width={2} height={18} fill="#6c6c6c" />
        {timeTicks.map((x) => (
          <rect key={x} x={x - 1} y={772} width={3} height={5} fill="#ffffff" />
        ))}
      </svg>
      <div className="flex h-[9px] items-stretch justify-between bg-[#f8f8f8]">
        <button
          type="button"
          aria-label="Sola kaydır"
          className="flex w-[13px] items-center justify-center border-b border-r border-[#808080] bg-[#e8e8e8]"
        >
          <svg className="h-[4px] w-[3px]" viewBox="0 0 3 4">
            <path d="M3 0V4L0 2Z" fill="black" />
          </svg>
        </button>
        <div className="flex">
          <span className="w-[8px] border-r border-[#808080] bg-[#d8d8d8]" />
          <button
            type="button"
            aria-label="Sağa kaydır"
            className="flex w-[14px] items-center justify-center border-b border-r border-[#808080] bg-[#e8e8e8]"
          >
            <svg className="h-[4px] w-[3px]" viewBox="0 0 3 4">
              <path d="M0 0V4L3 2Z" fill="black" />
            </svg>
          </button>
        </div>
      </div>
    </div>
    <div className="flex w-[55px] shrink-0 items-end justify-end">
      <button type="button" aria-label="Yenile" className="h-[17px] w-[17px] bg-[#dcdcdc]">
        <svg className="h-[17px] w-[17px]" viewBox="0 0 17 17">
          <path d="M9 3C5 3 3 6 5 9M8 14C12 14 14 11 12 8" fill="none" stroke="#20589c" strokeWidth="2" />
          <path d="M2 9H8L5 13ZM15 8H9L12 4Z" fill="#3070b8" />
        </svg>
      </button>
      <button type="button" aria-label="Geri" className="flex h-[10px] w-[10px] items-center justify-center bg-[#dcdcdc]">
        <svg className="h-[8px] w-[6px]" viewBox="0 0 6 8">
          <path d="M6 0V8L0 4Z" fill="#101080" />
        </svg>
      </button>
      <button
        type="button"
        aria-label="İleri"
        className="flex h-[10px] w-[10px] items-center justify-center border-l border-[#a0a0a0] bg-[#dcdcdc]"
      >
        <svg className="h-[8px] w-[6px]" viewBox="0 0 6 8">
          <path d="M0 0V8L6 4Z" fill="#101080" />
        </svg>
      </button>
    </div>
  </footer>
);

export default function App() {
  return (
    <main className="min-h-screen w-full border-b-2 border-[#a0a0a0] bg-[#dedede] px-[5px] font-['DejaVu_Sans','Liberation_Sans',sans-serif]">
      <div className="mb-px h-[3px] border-b border-[#b0b0b0]" />
      <Toolbar />
      <div className="flex flex-col gap-[2px] bg-[#ececec]">
        <MainPanel />
        <Dip1Panel />
        <Dip2Panel />
        <Bm2Panel />
        <Bm01Panel />
        <TimeStrip />
      </div>
    </main>
  );
}
